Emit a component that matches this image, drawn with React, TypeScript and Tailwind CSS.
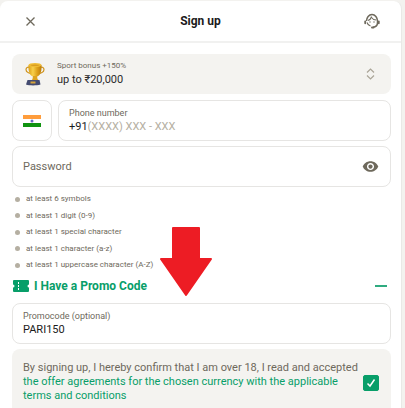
import { useState } from "react";
import { MdRemoveRedEye } from "react-icons/md";

const PASSWORD_RULES = [
    "at least 6 symbols",
    "at least 1 digit (0-9)",
    "at least 1 special character",
    "at least 1 character (a-z)",
    "at least 1 uppercase character (A-Z)",
];

function Support() {
    return (
        <svg width="16" height="16" viewBox="0 0 16 16" fill="none" stroke="currentColor" aria-hidden="true">
            <path strokeWidth="1.500" d="M2.500 8a5.500 6.500 0 0 1 11 0v1.500c0 2.500-1.500 4.500-4.500 4.700" />
            <path strokeWidth="1.100" d="M4 7.500C6 7 7 5.500 7.300 4.200 8.500 6 10 7 12.200 7M3 9.500c.5 1.700 1.700 3 3.500 3.500" />
            <path strokeWidth="1.800" strokeLinecap="round" d="M1.200 8.300v2M14.800 8.300v2" />
            <path strokeWidth="2" strokeLinecap="round" d="M8 14.500h1.500" />
            <circle cx="6" cy="9" r="0.700" fill="currentColor" stroke="none" />
            <circle cx="10" cy="9" r="0.700" fill="currentColor" stroke="none" />
        </svg>
    );
}

function Trophy() {
    return (
        <svg width="20" height="24" viewBox="0 0 20 24" fill="none" className="shrink-0" aria-hidden="true">
            <defs>
                <linearGradient id="cup" x1="3" y1="0" x2="17" y2="0" gradientUnits="userSpaceOnUse">
                    <stop stopColor="#d99a12" />
                    <stop offset="0.35" stopColor="#f8d04a" />
                    <stop offset="0.65" stopColor="#dfa21a" />
                    <stop offset="1" stopColor="#b97808" />
                </linearGradient>
            </defs>
            <path d="M4.500 5.500C.5 4 0 9 3 10.500c1.500.8 3 1 4 1.500M15.500 5.500c4-1.500 4.500 3.500 1.500 5-1.500.8-3 1-4 1.500" stroke="#cf941f" strokeWidth="1.200" />
            <path d="M3.500 3c-.5 7 1.500 12 6.500 12s7-5 6.500-12z" fill="url(#cup)" />
            <ellipse cx="10" cy="3" rx="6.500" ry="2" fill="#f0bd35" />
            <ellipse cx="10" cy="3.200" rx="4.500" ry="0.800" fill="#d99d20" />
            <path d="M8 14h4l.5 3 1.500 1.500H6.500L7.500 17z" fill="#dda31f" />
            <path d="M2.500 18h12l1 4.500c-4 1.200-11 1.200-14.500 0z" fill="#444b70" />
            <path d="M5.500 19.500h5v2h-5z" fill="#d7a53a" />
        </svg>
    );
}

function IndiaFlag() {
    return (
        <svg width="18" height="12" viewBox="0 0 18 12" aria-hidden="true">
            <path fill="#ff9d3c" d="M0 0h18v4H0z" />
            <path fill="#fff" d="M0 4h18v4H0z" />
            <path fill="#109310" d="M0 8h18v4H0z" />
            <circle cx="9" cy="6" r="1.500" fill="#6767c0" />
        </svg>
    );
}

function Ticket() {
    return (
        <svg width="16" height="12" viewBox="0 0 16 12" aria-hidden="true">
            <path
                fill="#089e69"
                d="M1 0h14a1 1 0 0 1 1 1v3.500a1.500 1.500 0 0 0 0 3V11a1 1 0 0 1-1 1H1a1 1 0 0 1-1-1V7.500a1.500 1.500 0 0 0 0-3V1a1 1 0 0 1 1-1z"
            />
            <path fill="#fff" d="M5 2h1v2H5zM5 5h1v2H5zM5 8h1v2H5z" />
        </svg>
    );
}

export default function App() {
    const [showPassword, setShowPassword] = useState(false);
    const [promoOpen, setPromoOpen] = useState(true);
    const [promo, setPromo] = useState("PARI150");
    const [accepted, setAccepted] = useState(true);

    return (
        <div className="h-screen overflow-hidden bg-[#f3f2ef] pt-px pr-[3px] font-['Roboto',sans-serif] text-[#6e695c]">
            <main className="relative flex h-full flex-col rounded-t-lg border-r border-[#e9e9e7] bg-white">
                <header className="flex h-[42px] shrink-0 items-center justify-between border-b-2 border-[#f1f1f0] pr-[21px] pl-6">
                    <button type="button" aria-label="Close" className="p-0.5">
                        <svg width="9" height="9" viewBox="0 0 9 9" stroke="#6e695c" strokeWidth="1.300" aria-hidden="true">
                            <path d="M.5.5l8 8M8.500.5l-8 8" />
                        </svg>
                    </button>
                    <h1 className="text-[12px] leading-4 font-bold text-[#1b1b1b]">Sign up</h1>
                    <button type="button" aria-label="Support">
                        <Support />
                    </button>
                </header>

                <form className="flex flex-1 flex-col pt-[11px] pr-2.5 pl-3" onSubmit={(e) => e.preventDefault()}>
                    {/* Bonus */}
                    <div className="flex h-10 shrink-0 items-center gap-3 rounded-lg bg-[#f4f3f0] pr-4 pl-[13px]">
                        <Trophy />
                        <div className="flex flex-1 flex-col">
                            <label htmlFor="bonus" className="text-[8px] leading-3">Sport bonus +150%</label>
                            <select id="bonus" className="appearance-none text-[11px] leading-4 text-[#2b2b2b] outline-none">
                                <option>up to ₹20,000</option>
                            </select>
                        </div>
                        <svg width="9" height="12" viewBox="0 0 9 12" fill="none" stroke="#aaa598" strokeWidth="1.200" aria-hidden="true">
                            <path d="M1 4.500L4.500 1 8 4.500M1 7.500L4.500 11 8 7.500" />
                        </svg>
                    </div>

                    {/* Phone */}
                    <div className="mt-1.5 flex h-[41px] shrink-0 gap-1.5">
                        <button
                            type="button"
                            aria-label="Country: India"
                            className="flex w-10 items-center justify-center rounded-lg border border-[#e6e5e3]"
                        >
                            <IndiaFlag />
                        </button>
                        <div className="flex flex-1 flex-col justify-center rounded-lg border border-[#e6e5e3] px-2.5">
                            <label htmlFor="phone" className="text-[9px] leading-3">Phone number</label>
                            <div className="flex text-[11px] leading-4">
                                <span className="text-[#1b1b1b]">+91</span>
                                <input
                                    id="phone"
                                    type="tel"
                                    placeholder="(XXXX) XXX - XXX"
                                    className="min-w-0 flex-1 outline-none placeholder:text-[#b5afa2]"
                                />
                            </div>
                        </div>
                    </div>

                    {/* Password */}
                    <div className="mt-[5px] flex h-[41px] shrink-0 items-center rounded-lg border border-[#e6e5e3] pr-[11px] pl-2.5">
                        <input
                            type={showPassword ? "text" : "password"}
                            aria-label="Password"
                            placeholder="Password"
                            className="min-w-0 flex-1 text-[11px] leading-4 outline-none placeholder:text-[#6e695c]"
                        />
                        <button type="button" aria-label="Show password" onClick={() => setShowPassword(!showPassword)}>
                            <MdRemoveRedEye size={17} />
                        </button>
                    </div>

                    <ul className="mt-1 flex h-[82px] shrink-0 flex-col justify-between px-[3px] text-[8px] leading-4">
                        {PASSWORD_RULES.map((rule) => (
                            <li key={rule} className="flex items-center gap-1.5">
                                <span className="size-[5px] rounded-full bg-[#b5afa2]" />
                                {rule}
                            </li>
                        ))}
                    </ul>

                    {/* Promo code */}
                    <button
                        type="button"
                        aria-expanded={promoOpen}
                        onClick={() => setPromoOpen(!promoOpen)}
                        className="mt-1 flex shrink-0 items-center gap-[5px] pr-1 pl-px text-[12px] leading-[18px] font-bold text-[#089e69]"
                    >
                        <Ticket />
                        I Have a Promo Code
                        <span className="ml-auto h-0.5 w-3 bg-[#2fab80]" />
                    </button>
                    {promoOpen && (
                        <div className="mt-2 flex h-[41px] shrink-0 flex-col justify-center rounded-lg border border-[#e6e5e3] px-2.5">
                            <label htmlFor="promo" className="text-[9px] leading-3">Promocode (optional)</label>
                            <input
                                id="promo"
                                value={promo}
                                onChange={(e) => setPromo(e.target.value)}
                                className="text-[11px] leading-4 text-[#1b1b1b] outline-none"
                            />
                        </div>
                    )}

                    {/* Agreement */}
                    <div className="mt-[5px] flex flex-1 items-start justify-between rounded-t-lg bg-[#f4f3f0] pt-3 pr-3 pl-[11px]">
                        <p className="text-[11px] leading-[14px]">
                            <label htmlFor="agree">
                                By signing up, I hereby confirm that I am over 18, I read and accepted
                            </label>
                            <br />
                            <a href="#terms" className="text-[#089e69]">
                                the offer agreements for the chosen currency with the applicable
                                <br />
                                terms and conditions
                            </a>
                        </p>
                        <span className="mt-3.5 grid size-4 shrink-0">
                            <input
                                id="agree"
                                type="checkbox"
                                checked={accepted}
                                onChange={(e) => setAccepted(e.target.checked)}
                                className="peer col-start-1 row-start-1 size-4 appearance-none rounded-xs border border-[#089e69] checked:bg-[#089e69]"
                            />
                            <svg
                                viewBox="0 0 16 16"
                                fill="none"
                                stroke="#fff"
                                strokeWidth="1.500"
                                className="pointer-events-none invisible col-start-1 row-start-1 size-4 peer-checked:visible"
                                aria-hidden="true"
                            >
                                <path d="M4.500 8.500L7 11l4.500-6.500" />
                            </svg>
                        </span>
                    </div>
                </form>

                {/* Pointer to the promo code field */}
                <svg
                    width="52"
                    height="70"
                    viewBox="0 0 52 70"
                    className="pointer-events-none absolute top-[226px] left-40"
                    aria-hidden="true"
                >
                    <path
                        d="M13 1h26v31h12L26 68 1 32h12z"
                        fill="#ed1c24"
                        stroke="#ed1c24"
                        strokeWidth="2"
                        strokeLinejoin="round"
                    />
                </svg>
            </main>
        </div>
    );
}
